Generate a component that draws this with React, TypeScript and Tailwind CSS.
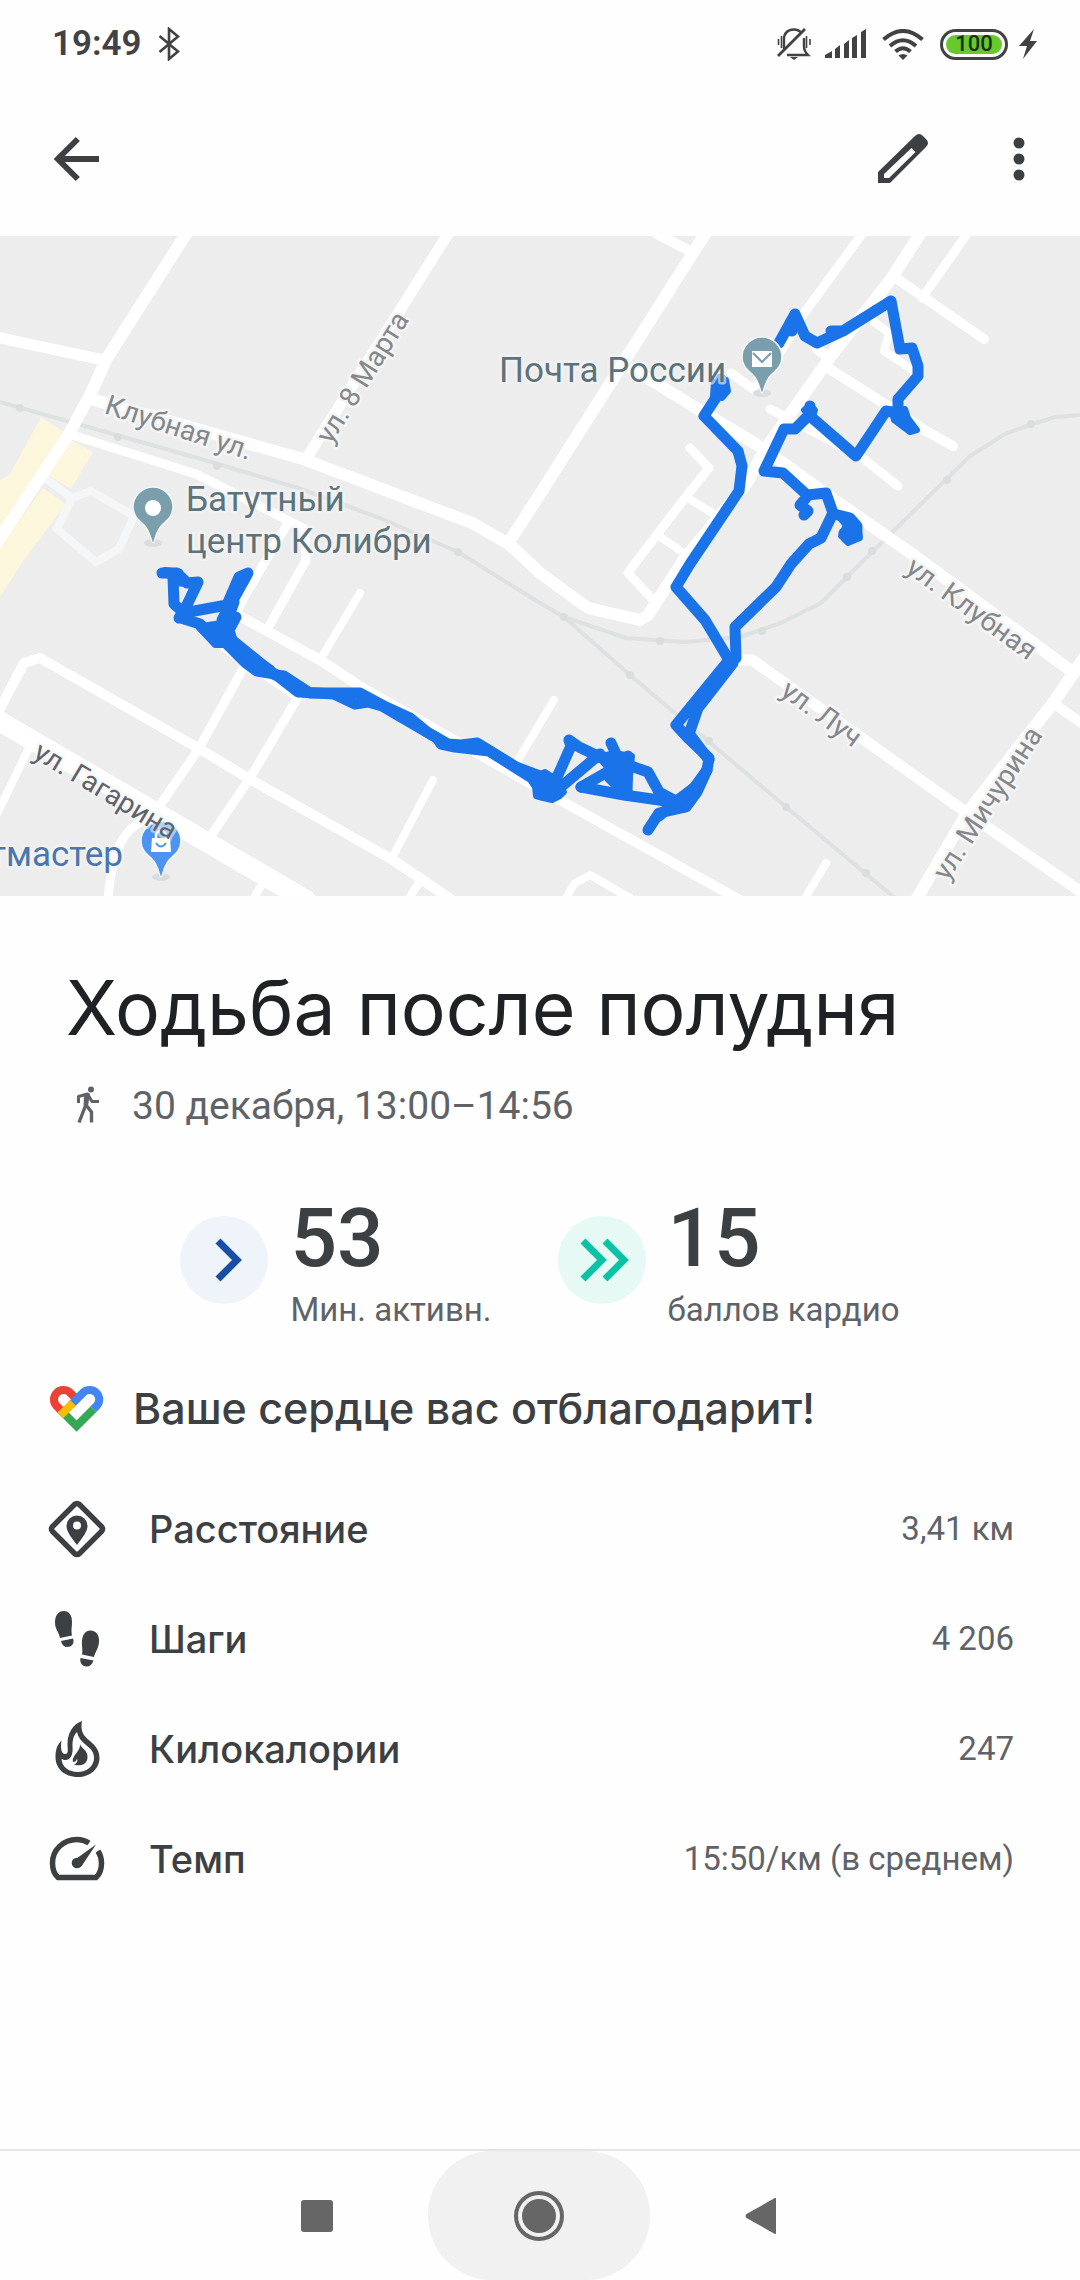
import React, { ReactNode } from 'react';

interface Metric {
    label: string;
    value: string;
    icon: ReactNode;
}

interface RoadProps {
    d: string;
    width?: number;
}

interface StreetLabelProps {
    x: number;
    y: number;
    angle: number;
    dark?: boolean;
    children: string;
}

/* ---------- Status bar ---------- */

function MutedBellIcon() {
    return (
        <svg viewBox="0 0 34 32" className="w-[34px] h-8" fill="none" stroke="#424244" strokeWidth="2.4">
            <path d="M7 21V11C7 5 11 1.500 17 1.500C20 1.500 23 3 25 5.500M27 10V19Q27 23 31 27H10" />
            <path d="M1 28L28 1" strokeWidth="2.800" />
            <path d="M1.500 11V17M4.500 8V20M29.500 8V20M33 11V17" strokeWidth="1.600" />
            <path d="M13 29H21L17 32Z" fill="#424244" stroke="none" />
        </svg>
    );
}

function SignalIcon() {
    return (
        <svg viewBox="0 0 42 30" className="w-[42px] h-[30px]" fill="#424244">
            <path d="M0 29V26L7 22V29ZM10 29V20L15 16V29ZM19 29V15L24 11V29ZM27 29V9L32 6V29ZM36 29V3L41 0V29Z" />
        </svg>
    );
}

function WifiIcon() {
    return (
        <svg viewBox="0 0 42 31" className="w-[42px] h-[31px]" fill="none" stroke="#424244" strokeWidth="4">
            <path d="M1.500 10.500Q21 -6.500 40.500 10.500" />
            <path d="M8 17Q21 5.500 34 17" />
            <path d="M13.500 22.500Q21 16 28.500 22.500" />
            <path d="M16.500 26.500Q21 23.500 25.500 26.500L21 31Z" fill="#424244" stroke="none" />
        </svg>
    );
}

function StatusBar() {
    return (
        <header className="flex h-[88px] items-center justify-between pl-[52px] pr-[43px]">
            <div className="flex items-center gap-4">
                <span className="text-[35px] leading-10 font-semibold text-[#424244]">19:49</span>
                <svg viewBox="0 0 22 34" className="w-[22px] h-[34px]" fill="none" stroke="#424244" strokeWidth="2.6">
                    <path d="M1.500 9L20 24.500L11 32V2L20 9.500L1.500 25" />
                </svg>
            </div>
            <div className="flex items-center">
                <MutedBellIcon />
                <span className="ml-[14px]"><SignalIcon /></span>
                <span className="ml-[15px]"><WifiIcon /></span>
                <span className="ml-4 flex h-[31px] w-[68px] rounded-full border-[3px] border-[#424244] p-[3px]">
                    <span className="flex flex-1 items-center justify-center rounded-full bg-[#67c92c] text-[22px] leading-5 font-medium text-[#17300a]">
                        100
                    </span>
                </span>
                <svg viewBox="0 0 18 30" className="ml-[11px] h-[30px] w-[18px]" fill="#424244">
                    <path d="M15 0L0 17H8L4 30L18 12H11Z" />
                </svg>
            </div>
        </header>
    );
}

/* ---------- Toolbar ---------- */

function Toolbar() {
    return (
        <nav className="flex h-[148px] items-center justify-between pb-1.5 pl-11 pr-7">
            <button type="button" aria-label="Назад" className="flex size-[66px] items-center justify-center">
                <svg viewBox="0 0 24 24" className="size-[66px]" fill="none" stroke="#3c4043" strokeWidth="2.1">
                    <path d="M20 12H5.500M12.300 4.700L5 12L12.300 19.300" />
                </svg>
            </button>
            <div className="flex items-center gap-[50px]">
                <button type="button" aria-label="Изменить" className="size-[66px]">
                    <svg viewBox="0 0 66 66" className="size-[66px]" fill="#3c4043">
                        <path
                            fillRule="evenodd"
                            d="M8 57V46L45 10Q49 6 53 10L56 13Q60 17 56 21L20 57ZM14 52H19L45.500 26L41.500 22L14 48Z"
                        />
                    </svg>
                </button>
                <button type="button" aria-label="Ещё" className="size-[66px]">
                    <svg viewBox="0 0 66 66" className="size-[66px]" fill="#3c4043">
                        <circle cx="33" cy="17" r="5.500" />
                        <circle cx="33" cy="33" r="5.500" />
                        <circle cx="33" cy="49" r="5.500" />
                    </svg>
                </button>
            </div>
        </nav>
    );
}

/* ---------- Map ---------- */

function Road({ d, width = 11 }: RoadProps) {
    return <path d={d} strokeWidth={width} />;
}

function StreetLabel({ x, y, angle, dark, children }: StreetLabelProps) {
    return (
        <text
            x={x}
            y={y}
            dy="10"
            transform={`rotate(${angle} ${x} ${y})`}
            textAnchor="middle"
            className={dark ? 'fill-[#5f6368] text-[28px]' : 'fill-[#85878a] text-[28px]'}
        >
            {children}
        </text>
    );
}

function Pin({ x, y, color, children }: { x: number; y: number; color: string; children: ReactNode }) {
    return (
        <g transform={`translate(${x} ${y})`}>
            <ellipse cx="0" cy="35" rx="9" ry="4" fill="#dadcdd" />
            <path
                d="M0 35C-2 35 -2 24 -9 17C-16 11 -20 7 -20 -1A20 20 0 0 1 20 -1C20 7 16 11 9 17C2 24 2 35 0 35Z"
                fill={color}
                stroke="#f5f7f8"
                strokeWidth="1.500"
            />
            {children}
        </g>
    );
}

// Every rail tie marker sits directly on one of the two lines
const railTies = [
    [20, 172], [118, 201], [217, 230], [458, 316], [564, 381], [660, 405], [762, 395], [847, 341],
    [872, 315], [947, 244], [1031, 188], [630, 439], [709, 505], [786, 571], [866, 637],
];

function RouteMap() {
    return (
        <svg
            viewBox="0 0 1080 660"
            preserveAspectRatio="xMidYMid slice"
            className="block w-full bg-[#ededed]"
            role="img"
            aria-label="Маршрут"
        >
            <g fill="#fbf6dc">
                <path d="M41 181L64 196L0 305V244L10 238Z" />
                <path d="M71 204L93 216L71 253L46 238Z" />
                <path d="M43 252L66 268L24 324L0 361V310Z" />
            </g>

            <path
                d="M45 242L72 262L91 255L134 280L119 313L96 326L57 293L72 262"
                fill="none"
                stroke="#f4f6f8"
                strokeWidth="8"
            />

            <g fill="none" stroke="#dee1e1" strokeWidth="4">
                <path d="M0 166L215 227L298 252L380 282L458 316L540 367L564 381L626 402L685 406L740 401L781 387L821 367L864 324L970 220L1005 198L1032 188L1055 181L1080 179" />
                <path d="M564 381L630 439L786 571L895 662" />
            </g>
            <g fill="#dadddd">
                {railTies.map(([x, y]) => (
                    <circle key={`${x}-${y}`} cx={x} cy={y} r="4" />
                ))}
            </g>

            <g fill="none" stroke="#ffffff" strokeLinejoin="round" strokeLinecap="round">
                <Road d="M186 -2L107 122L91 157L69 198L-4 308" width={12} />
                <Road d="M-4 101L103 124" />
                <Road d="M448 -2L306 223" />
                <Road d="M91 163L303 223L472 287L509 308L540 337L588 372L640 384L648 379L685 322L747 247L764 215L831 120L891 43L920 -2" width={12} />
                <Road d="M509 306L540 258L705 -2" width={12} />
                <Road d="M657 -2L690 15" width={10} />
                <Road d="M862 -2L802 80L764 143L753 153L731 137" width={9} />
                <Road d="M896 42L984 103" width={10} />
                <Road d="M967 -2L922 62" width={9} />
                <Road d="M633 133L698 173L764 213L833 263L915 320L1070 434" width={12} />
                <Road d="M817 113L829 122M828 132L888 170L926 195L953 210" width={10} />
                <Road d="M874 86L889 97L884 115L914 135" width={8} />
                <Road d="M770 173L860 220L898 250" width={9} />
                <Road d="M690 212L709 232L688 258L633 330L628 337L655 366" width={9} />
                <Road d="M688 262L714 278M659 300L688 320" width={8} />
                <Road d="M69 198L196 238L289 285L235 377M289 285L305 293L306 324L268 392" width={9} />
                <Road d="M234 377L320 424L358 449L470 513L540 553L740 664" width={10} />
                <Road d="M360 357L320 424" width={8} />
                <Road d="M224 411L298 461L250 542L210 601" width={9} />
                <Road d="M244 431L198 514L158 572L131 593Q112 610 108 664" width={9} />
                <Road d="M-4 480L24 427L40 422L198 512L248 542L393 624L452 664" width={10} />
                <Road d="M-6 482L306 664" width={20} />
                <Road d="M28 514L-4 580" width={8} />
                <Road d="M433 544L391 624M262 648L253 664M418 648L408 664" width={8} />
                <Road d="M554 464L518 524" width={8} />
                <Road d="M565 664L574 648L590 639L630 662" width={8} />
                <Road d="M826 627L804 664" width={8} />
                <Road d="M740 424H752L967 577L1084 658" />
                <Road d="M1084 422L1053 467L967 577L916 664" width={12} />
                <Road d="M1053 467L1084 489" width={10} />
            </g>

            {/* Recorded walk */}
            <g fill="none" stroke="#1a73e8" strokeWidth="11" strokeLinejoin="round" strokeLinecap="round">
                <path d="M721 143L719 157L704 180L738 215L742 230L739 255L690 328L676 351L705 384L729 424" />
                <path d="M729 424L676 489L688 502L709 522L707 534L697 556L686 571L659 577L648 594" />
                <path d="M733 427L698 472L688 501M688 496L709 524M707 534L694 552L678 564L659 580" />
                <path d="M729 424L736 422L735 391L776 351L791 328L809 308L821 302L833 277L826 257L807 259L783 237L764 235L784 193L795 193L810 178V170" />
                <path d="M810 180L856 220L886 175L898 177" />
                <path d="M898 173V163L918 140V130L912 112L900 113L891 65L843 95L817 107L805 100L795 78L779 107M795 78L792 95M831 95L843 95" />
                <path d="M806 262L800 269L808 275L804 279" />
                <path d="M834 278L850 282L857 290L856 300L844 297L848 303L852 296L846 284" />
                <path d="M162 337L177 337L187 347L198 346L186 371L179 382M173 341L174 368L184 377L189 376L227 369L239 341L248 337L222 384" />
                <path d="M181 382L200 388L220 406L226 388L234 366M236 381L227 398" />
                <path d="M227 400L275 439L284 440L310 457H360L386 471L410 482L427 496L448 508L461 509L477 507L516 531L545 542" />
                <path d="M226 407L246 427L257 435L275 438L298 456L334 458L355 468L368 466L382 470L437 502L441 508L455 511L489 515L532 542L540 554" />
                <path d="M237 412L270 434M252 424L262 433" />
                <path d="M554 548L571 510L569 504L579 511L602 522M556 555L600 518M581 551L609 535L617 520L611 507M628 520L627 558" />
                <path d="M581 551L624 559L659 564L678 567M609 541L622 554M631 530L648 536L659 556L678 566L694 552" />
            </g>
            <g fill="#1a73e8" stroke="#1a73e8" strokeWidth="6" strokeLinejoin="round">
                <path d="M714 146L726 144L728 155L722 162L713 160Z" />
                <path d="M892 176L905 173L908 182L917 194L910 196L894 184Z" />
                <path d="M804 174L810 169L815 174L812 184Z" />
                <path d="M836 278L850 280L859 290L860 302L848 307L841 300L846 289Z" />
                <path d="M165 334L180 336L185 348L176 347L170 341Z" />
                <path d="M208 389L229 386L234 402L227 409L215 409L199 392Z" />
                <path d="M534 540L545 536L556 543L564 556L560 560L552 564L543 562L536 560Z" />
                <path d="M598 520L612 518L620 518L632 520L630 540L628 552L616 544L606 530Z" />
            </g>

            <g className="stroke-[#f4f5f5]" strokeWidth="5" strokeLinejoin="round" paintOrder="stroke">
                <StreetLabel x={179} y={191} angle={18}>Клубная ул.</StreetLabel>
                <StreetLabel x={362} y={141} angle={-58}>ул. 8 Марта</StreetLabel>
                <StreetLabel x={972} y={372} angle={36}>ул. Клубная</StreetLabel>
                <StreetLabel x={822} y={477} angle={36}>ул. Луч</StreetLabel>
                <StreetLabel x={987} y={567} angle={-57}>ул. Мичурина</StreetLabel>
            </g>

            <Pin x={153} y={272} color="#7a9eab">
                <circle r="8" fill="#ffffff" />
            </Pin>
            <Pin x={762} y={122} color="#7a9eab">
                <path d="M-10 -7H10V9H-10Z" fill="#ffffff" />
                <path d="M-9 -5L0 4L9 -5" fill="none" stroke="#7a9eab" strokeWidth="2.200" />
            </Pin>
            <Pin x={161} y={606} color="#4d93f2">
                <path d="M-9 -4H9L10 10H-10Z" fill="#ffffff" />
                <path d="M-5 -4V-6A5 5 0 0 1 5 -6V-4" fill="none" stroke="#ffffff" strokeWidth="2.500" />
                <path d="M-5 1Q0 8 5 1" fill="none" stroke="#4d93f2" strokeWidth="2" />
            </Pin>

            <g className="stroke-[#f4f5f5]/60" strokeWidth="5" strokeLinejoin="round" paintOrder="stroke">
                <StreetLabel x={106} y={554} angle={31} dark>ул. Гагарина</StreetLabel>
                <g className="fill-[#5c737c] text-[35px]">
                    <text x="499" y="146">Почта России</text>
                    <text x="186" y="275">Батутный</text>
                    <text x="186" y="317">центр Колибри</text>
                </g>
                <text x="123" y="630" textAnchor="end" className="fill-[#4a76ae] text-[35px]">тмастер</text>
            </g>
        </svg>
    );
}

/* ---------- Summary ---------- */

function WalkIcon() {
    return (
        <svg viewBox="26 25 40 40" className="size-10" fill="none" stroke="#5f6368" strokeWidth="3" strokeLinejoin="round">
            <circle cx="51" cy="28.500" r="3" fill="#5f6368" stroke="none" />
            <path d="M38.500 42V35.500L47.500 33L52 40.500H59" />
            <path d="M45 46L39 61.500M46 44L51.500 51V61.500" strokeWidth="3.400" />
            <path d="M44 33.500L50 32.500L48 45L43.500 47Z" fill="#5f6368" stroke="none" />
        </svg>
    );
}

function ActivityScore({ value, label, double }: { value: string; label: string; double?: boolean }) {
    return (
        <div className="flex items-start gap-[22px]">
            <span
                className={
                    double
                        ? 'mt-6 flex size-[88px] items-center justify-center rounded-full bg-[#e6f9f5]'
                        : 'mt-6 flex size-[88px] items-center justify-center rounded-full bg-[#eff3fa]'
                }
            >
                <svg viewBox="0 0 88 88" className="size-[88px]" fill="none" strokeWidth="7">
                    {double ? (
                        <path d="M25 25L44 44L25 63M47 25L66 44L47 63" stroke="#0bc2a5" />
                    ) : (
                        <path d="M38 25L57 44L38 63" stroke="#174ea6" />
                    )}
                </svg>
            </span>
            <div>
                <p className="text-[82px] leading-[92px] font-medium text-[#3c4043]">{value}</p>
                <p className="text-[33px] leading-[52px] text-[#5f6368]">{label}</p>
            </div>
        </div>
    );
}

function HeartLogo() {
    return (
        <svg viewBox="0 0 56 48" className="h-12 w-14" fill="none" strokeWidth="8">
            <path d="M14.200 28.600L7.300 21.700A9.500 9.500 0 0 1 20.700 8.300L27 14.600" stroke="#ea4335" />
            <path d="M44.500 25.100L27.600 42L14.200 28.600" stroke="#34a853" />
            <path d="M22 20.800L34.500 8.300A9.500 9.500 0 0 1 47.900 21.700L44.500 25.100" stroke="#4285f4" />
            <path d="M11.400 31.400L24 18.800" stroke="#fbbc04" />
        </svg>
    );
}

/* ---------- Metrics ---------- */

function DistanceIcon() {
    return (
        <svg viewBox="0 0 60 60" className="size-[60px]" fill="none" stroke="#3c4043">
            <path d="M27.500 5.500Q30 3.500 32.500 5.500L54.500 27.500Q56.500 30 54.500 32.500L32.500 54.500Q30 56.500 27.500 54.500L5.500 32.500Q3.500 30 5.500 27.500Z" strokeWidth="5.500" />
            <path
                d="M30 46C25 39 19.500 33 19.500 27A10.500 10.500 0 0 1 40.500 27C40.500 33 35 39 30 46ZM30 22.500A4 4 0 1 0 30 30.500A4 4 0 1 0 30 22.500Z"
                fill="#3c4043"
                fillRule="evenodd"
                stroke="none"
            />
        </svg>
    );
}

function StepsIcon() {
    return (
        <svg viewBox="0 0 60 60" className="size-[60px]" fill="#3c4043">
            <path d="M17 2C10 2 8 8 8 14C8 20 12 23 13 29L25 26.500C24 21 25 18 25 13C25 6 22 2 17 2Z" />
            <path d="M14 32L26 29.500C28 35 24 38 20.500 38C17 38 15 36 14 32Z" />
            <path d="M43 21.500C50 21.500 52.500 27 52 33C51.500 40 48 43 47 48L35 45.500C36 40 34.500 37 35 32C35.500 25 39 21.500 43 21.500Z" />
            <path d="M33.500 49L46.500 51.500C45 55.500 43 57.500 39.500 57.500C35 57 32.500 54 33.500 49Z" />
        </svg>
    );
}

function FlameIcon() {
    return (
        <svg viewBox="0 0 60 60" className="size-[60px]" fill="#3c4043">
            {/* Outer flame with the hollow cut out */}
            <path
                fillRule="evenodd"
                d="M35 2C33 13 37 17 43 22C49 27 52.500 32 52.500 39C52.500 50 43 58 31 58C17 58 8.500 49 8.500 38C8.500 31 10 26 14.500 21.500C13.500 28 14 35 18 35C22 35 20.500 30 20.500 25C20.500 14 26 5 35 2ZM30 13C26 17 25.500 22 25.500 27C26 34 25 40 19 41C17 41 15.500 40.500 14.500 40C15 48 22 53 30.500 53C40 53 47 47 47 39C47 33 44 30 39 26C34 22 31 18 30 13Z"
            />
            <path d="M33 25C34 29 40.500 31 40.500 38C40.500 45 34 48 27 45.500C30 44.500 31 42 30 39.500C29.500 42 28 43 26 43C24 37 34 32 33 25Z" />
        </svg>
    );
}

function PaceIcon() {
    return (
        <svg viewBox="0 0 60 60" className="size-[60px]" fill="none" stroke="#3c4043" strokeWidth="5.500">
            <path d="M42 14C38 11.500 34 10.500 30 10.500C16 10.500 5.500 21 5.500 34C5.500 41 7 45 11 48.500H49C53 45 54.500 40 54.500 34C54.500 29.500 53.500 26 51 22" />
            <path d="M49 15.500L35 36.500C31 41 24 37 26 32Z" fill="#3c4043" stroke="none" />
            <circle cx="30" cy="34" r="5.300" fill="#3c4043" stroke="none" />
        </svg>
    );
}

const metrics: Metric[] = [
    { label: 'Расстояние', value: '3,41 км', icon: <DistanceIcon /> },
    { label: 'Шаги', value: '4 206', icon: <StepsIcon /> },
    { label: 'Килокалории', value: '247', icon: <FlameIcon /> },
    { label: 'Темп', value: '15:50/км (в среднем)', icon: <PaceIcon /> },
];

function MetricRow({ label, value, icon }: Metric) {
    return (
        <div className="flex h-[110px] items-center">
            {icon}
            <dt className="ml-[42px] flex-1 font-['Inter','Roboto',sans-serif] text-[38px] leading-[48px] font-medium text-[#3c4043]">{label}</dt>
            <dd className="text-[33px] leading-[44px] text-[#5f6368]">{value}</dd>
        </div>
    );
}

/* ---------- System navigation ---------- */

function SystemNav() {
    return (
        <footer className="mt-auto flex h-[131px] items-center justify-center border-t-2 border-[#e4e4e4] pr-[2px]">
            <button type="button" aria-label="Недавние" className="flex h-full w-[222px] items-center justify-center">
                <span className="size-8 rounded-[3px] bg-[#666666]" />
            </button>
            <button type="button" aria-label="Домой" className="flex h-full w-[222px] items-center justify-center rounded-[64px] bg-[#f1f1f1]">
                <span className="flex size-[50px] items-center justify-center rounded-full border-4 border-[#666666]">
                    <span className="size-[34px] rounded-full bg-[#666666]" />
                </span>
            </button>
            <button type="button" aria-label="Назад" className="flex h-full w-[222px] items-center justify-center">
                <svg viewBox="0 0 32 38" className="h-[38px] w-8" fill="#666666">
                    <path d="M31 2V36Q31 38 29 36.500L1.500 21Q-.5 19 1.500 17L29 1.500Q31 0 31 2Z" />
                </svg>
            </button>
        </footer>
    );
}

export default function App() {
    return (
        <div className="flex min-h-screen flex-col bg-[#fefefe] font-['Roboto','Noto_Sans',sans-serif]">
            <StatusBar />
            <Toolbar />
            <RouteMap />

            <main>
                <section className="px-[66px] pt-[60px]">
                    <h1 className="font-['Inter','Roboto',sans-serif] text-[75px] leading-[104px] text-[#202124]">Ходьба после полудня</h1>
                    <p className="mt-[22px] flex items-center gap-[26px] text-[39px] leading-[48px] text-[#5f6368]">
                        <WalkIcon />
                        30 декабря, 13:00–14:56
                    </p>
                </section>

                <section className="mt-[62px] flex justify-center gap-[66px]">
                    <ActivityScore value="53" label="Мин. активн." />
                    <ActivityScore value="15" label="баллов кардио" double />
                </section>

                <h2 className="mt-11 flex items-center gap-7 px-[49px] font-['Inter','Roboto',sans-serif] text-[43px] leading-[56px] font-medium text-[#3c4043]">
                    <HeartLogo />
                    Ваше сердце вас отблагодарит!
                </h2>

                <dl className="mt-[38px] pl-[47px] pr-[66px]">
                    {metrics.map((metric) => (
                        <MetricRow key={metric.label} {...metric} />
                    ))}
                </dl>
            </main>

            <SystemNav />
        </div>
    );
}
